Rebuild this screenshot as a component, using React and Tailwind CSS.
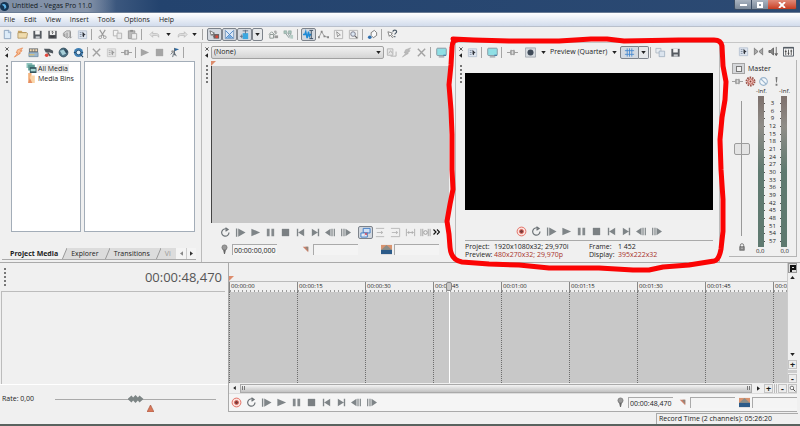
import React, { useState } from "react";

const icons = {
  newFile: (
    <>
      <path d="M2.5 1.5h5l2 2v7h-7z" fill="#dcebf8" stroke="#8ba3bd" />
      <path d="M7 1v3h3" fill="#b5cfe8" stroke="#8ba3bd" strokeWidth=".7" />
    </>
  ),
  folder: (
    <>
      <path d="M1 3.500V2h4l1 1.200h4V5H2.500z" fill="#c9a363" />
      <path d="M1 10V4h9.500l1 .8-1 5.200z" fill="#f0dcae" stroke="#a98b53" strokeWidth=".8" />
    </>
  ),
  save: (
    <>
      <path d="M1.500 2h9v8.500h-9z" fill="#555a60" />
      <path d="M3.500 2h5v4h-5z" fill="#f4f4f4" />
      <path d="M4 8h4.500v2.500H4z" fill="#c9ccd0" />
    </>
  ),
  saveAs: (
    <>
      <path d="M1.500 2h9v8.500h-9z" fill="#4c4f54" />
      <path d="M3 2h6v4.500H3z" fill="#f1f1f1" />
      <path d="M5 3.200c1-1 2.500 0 1 1.200v.8M4 8.500h4" stroke="#333" fill="none" />
    </>
  ),
  render: (
    <>
      <path d="M1.500 7.500V4.500L5 2h4v6l-3 2z" fill="#d8d8d8" stroke="#999" />
      <path d="M3 8V5m2.500 4V4M9 3v7l1.500-1.500" stroke="#8a8a8a" fill="none" />
    </>
  ),
  props: (
    <>
      <path d="M1.500 2h9v8.500h-9z" fill="#dfe6f0" stroke="#b9c4d3" />
      <path d="M3 4h2M3 6h2M3 8h2" stroke="#7d8ba0" />
      <path d="M6 3l3.500 3.500H8L7.500 9 6 8z" fill="#30343b" />
    </>
  ),
  propsGray: (
    <>
      <path d="M1.500 2h9v8.500h-9z" fill="#e4e4e4" stroke="#c9c9c9" />
      <path d="M3 4h2M3 6h2M3 8h2" stroke="#aaa" />
      <path d="M6 3l3.500 3.500H8L7.500 9 6 8z" fill="#999" />
    </>
  ),
  cut: (
    <>
      <path d="M3 1l4.500 7M9 1L4.500 8" stroke="#999" strokeWidth="1.200" fill="none" />
      <circle cx="3.500" cy="9" r="1.500" fill="none" stroke="#999" />
      <circle cx="8.500" cy="9" r="1.500" fill="none" stroke="#999" />
    </>
  ),
  copy: (
    <>
      <path d="M1.500 1.500h5v6h-5z" fill="#f3f3f3" stroke="#b2b2b2" />
      <path d="M5.500 4.500h5v6h-5z" fill="#e9e9e9" stroke="#b2b2b2" />
    </>
  ),
  paste: (
    <>
      <path d="M1.500 2h7v8.500h-7z" fill="#b9b9b9" stroke="#999" />
      <path d="M3.500 1h3v2h-3z" fill="#8d8d8d" />
      <path d="M5 5h5.500v6H5z" fill="#eee" stroke="#aaa" />
    </>
  ),
  undo: <path d="M1 6l3-3v2h4c2.500 0 3 2 2.500 4C10 7.500 9 7 8 7H4v2z" fill="#e3e3e3" stroke="#b5b5b5" strokeWidth=".8" />,
  redo: <path d="M11 6L8 3v2H4C1.500 5 1 7 1.500 9 2 7.500 3 7 4 7h4v2z" fill="#e3e3e3" stroke="#b5b5b5" strokeWidth=".8" />,
  snap: (
    <>
      <path d="M1 2l5 2.500L4.500 5 6 8 5 8.500 3.500 5.500 2.500 7z" fill="#fff" stroke="#555" strokeWidth=".8" />
      <path d="M5 5.500h6v5H5z" fill="#6b6060" />
      <circle cx="8.500" cy="8.500" r="1.600" fill="#d8493a" />
    </>
  ),
  crossfade: (
    <>
      <path d="M1.500 1v9.500h9V1" fill="#dbe7f5" stroke="#7b9cc0" />
      <path d="M2 2l8 8M10 2L2 10" stroke="#4d86c6" />
      <path d="M3 10l3-3.500L9 10z" fill="#6ba5de" />
    </>
  ),
  ripple: (
    <>
      <path d="M4 4.500h6v6.500H4z" fill="#3ba7e0" />
      <path d="M7 1v4M1 8h3M3 6v4M4 2h6" stroke="#5b6f83" />
    </>
  ),
  lockEnv: (
    <>
      <path d="M1 6l3-3 3 3 3-2M2 6h4v4H2z" stroke="#8a9590" fill="none" />
      <circle cx="8" cy="3" r="1.500" fill="#aaa" />
      <path d="M7 7h4v3H7z" fill="#999" />
    </>
  ),
  group: (
    <>
      <path d="M1 2h3v3H1zM6 2h3v3H6z" fill="#a8c7bd" stroke="#889c96" strokeWidth=".6" />
      <path d="M3 5l4 5M8 5l2 5M5 4l3 5" stroke="#899" />
      <path d="M8 6.500h3v4H8z" fill="#b5cdc5" />
    </>
  ),
  normalEdit: (
    <>
      <path d="M0 6h2l1-3 1.500 7L6 3l1 5 1-2h1" stroke="#1d8ad6" strokeWidth="1.600" fill="none" />
      <path d="M7 1.500h4M9 2v8.500M7 10.500h4" stroke="#30475e" fill="none" />
    </>
  ),
  envelope: (
    <>
      <path d="M1 9l3-6 3 5 4 1" stroke="#999" fill="none" />
      <path d="M3 2h2v2H3zM6 7h2v2H6zM0 8h2v2H0zM10 8h2v2h-2z" fill="#888" />
    </>
  ),
  selection: (
    <>
      <path d="M1.500 1.500h9v9h-9z" fill="none" stroke="#b5b5b5" />
      <path d="M4 3l4 3.500-1.800.3L5 8.500z" fill="#fff" stroke="#666" strokeWidth=".7" />
    </>
  ),
  zoomTool: (
    <>
      <path d="M1.500 1.500h9v9h-9z" fill="none" stroke="#b5b5b5" />
      <circle cx="5.500" cy="5.500" r="2.500" fill="#dbe7f3" stroke="#778" />
      <path d="M7.500 7.500l2.500 2.500" stroke="#666" strokeWidth="1.400" />
    </>
  ),
  script: (
    <>
      <path d="M8 1.500L4.500 4v3L7 9.500 10.500 7V4z" fill="#fafafa" stroke="#555" strokeWidth=".8" />
      <circle cx="3" cy="9" r="2" fill="#2f6fae" />
    </>
  ),
  help: (
    <>
      <path d="M1 3l5 1.500-1.500 1L7 8.500 6 9.500 3.500 6.500 2.500 8z" fill="#fff" stroke="#666" strokeWidth=".8" />
      <path d="M6.500 3c0-2.500 4-2.500 4 0 0 1.500-2 1.500-2 3M8.500 7.500V9" stroke="#4a5966" strokeWidth="1.300" fill="none" />
    </>
  ),
  bolt: <path d="M10.500 1L5 3 3.500 6.500h2L1.500 11 8 7H6.500L10 4H8z" fill="#f9c096" stroke="#e6864f" strokeWidth=".8" />,
  importMedia: (
    <>
      <path d="M1 1.500h10v4H1z" fill="#6d7276" />
      <path d="M2 2.500h2v2H2zM5 2.500h2v2H5zM8 2.500h2v2H8z" fill="#f5d9ae" />
      <path d="M1 6h10v4.500H1z" fill="#9db7cc" stroke="#5d7d98" strokeWidth=".7" />
      <path d="M1 8.500h6" stroke="#e8c25f" />
    </>
  ),
  capture: (
    <>
      <path d="M1 2h6l4 2v3L7 6H3z" fill="#50585f" />
      <path d="M5 6l3 4" stroke="#555" strokeWidth="1.500" />
      <circle cx="4" cy="9" r="2" fill="#e2493e" />
    </>
  ),
  disc: (
    <>
      <circle cx="6" cy="6" r="4.800" fill="#4f7487" stroke="#3a5564" />
      <path d="M2 4l4-1 3 4-4 2z" fill="#a7cfd8" />
      <path d="M6 1l5 4-2 2z" fill="#30485a" />
    </>
  ),
  globe: (
    <>
      <circle cx="6" cy="6" r="5" fill="#3f7fb4" />
      <circle cx="6" cy="6" r="2.500" fill="#e4f1fb" stroke="#2b5578" />
      <path d="M1 6h2M9 6h2M8 8l3 3" stroke="#274a68" strokeWidth="1.300" />
    </>
  ),
  close: <path d="M2 2l8 8M10 2L2 10" stroke="#a2a2a2" strokeWidth="1.500" />,
  fx: <path d="M0 6h4M8 6h4M4.500 3v6M7.500 3v6M4 4v4h4V4z" stroke="#999" fill="#ddd" />,
  playGray: <path d="M2 2l9 4-9 4z" fill="#a5a5a5" />,
  stopGray: <path d="M2 2h8v8H2z" fill="#a5a5a5" />,
  preview: (
    <>
      <path d="M6 1l5 1.500-5 2z" fill="#29669e" />
      <path d="M6 1v8M2 8l3-3 3 5M4 11l1-4" stroke="#5b6670" fill="none" />
      <circle cx="4" cy="5" r="1.500" fill="#999" />
    </>
  ),
  mediaFx: (
    <>
      <path d="M1.500 2h6v7h-6z" fill="#e7e7e7" stroke="#b5b5b5" />
      <path d="M3 7l2-3 2 3M5 10h6V5" stroke="#b0b0b0" fill="none" />
    </>
  ),
  boltGray: <path d="M10.500 1L5 3 3.500 6.500h2L1.500 11 8 7H6.500L10 4H8z" fill="#bbb" stroke="#aaa" strokeWidth=".6" />,
  monitor: (
    <>
      <rect x=".8" y="1.300" width="10.400" height="8" rx="1" fill="#8fdfe5" stroke="#8496a1" />
      <path d="M3 10.800h6" stroke="#8b949c" strokeWidth="1.200" />
      <path d="M8 9h3" stroke="#3d78a6" strokeWidth="1.200" />
    </>
  ),
  split: (
    <>
      <path d="M.500 1h11v10H.500z" fill="#d6dbe0" stroke="#a5abb2" />
      <circle cx="6" cy="6" r="3.300" fill="#3f4a58" />
    </>
  ),
  grid: <path d="M1 4h10M1 8h10M3.500 1.500v9M6 1.500v9M8.500 1.500v9" stroke="#3f86cf" strokeWidth=".9" />,
  copyBlue: (
    <>
      <path d="M1 1.500h5.500v5H1z" fill="#e8edf2" stroke="#a5afba" strokeWidth=".8" />
      <path d="M4.500 4.500h6v6h-6z" fill="#dbe4ee" stroke="#9aaabb" strokeWidth=".8" />
    </>
  ),
  refresh: <path d="M8 2.700A4 4 0 1 0 9.800 6M6 .8l2.800 2L6 4.500" stroke="#6c7276" strokeWidth="1.300" fill="none" />,
  playStart: <path d="M1 1.500h1.500v9H1zM3.500 1.500L11.500 6l-8 4.500z" fill="#7f8588" />,
  play: <path d="M1.500 1.800L11 6l-9.500 4.200z" fill="#7f8588" />,
  pause: <path d="M2 2h3v8H2zM7 2h3v8H7z" fill="#858a8d" />,
  stop: <path d="M2 2h8v8H2z" fill="#7b8083" />,
  first: <path d="M2 2h1.500v8H2zM10 2v8L3.500 6z" fill="#7f8588" />,
  last: <path d="M8.500 2H10v8H8.500zM2 2v8l6.500-4z" fill="#7f8588" />,
  prevFrame: <path d="M0 6l6-4v8zM7 2h1.300v8H7zM9.500 2h1.300v8H9.500z" fill="#7f8588" />,
  nextFrame: <path d="M12 6L6 2v8zM3.700 2H5v8H3.700zM1.200 2h1.300v8H1.200z" fill="#7f8588" />,
  record: (
    <>
      <circle cx="6" cy="6" r="4.800" fill="#fbe3df" stroke="#e0685c" />
      <circle cx="6" cy="6" r="2.200" fill="#7a3a3a" stroke="#dd675b" />
    </>
  ),
  overlay: (
    <>
      <path d="M3.500 1.500h7.500v5H3.500z" fill="#cfe0f5" stroke="#3b79c4" />
      <path d="M1 6.500h7V11H1z" fill="#e4ecf7" stroke="#3b79c4" />
      <path d="M5 6l3 3M8 6L5 9" stroke="#d34b5c" />
    </>
  ),
  addRight: <path d="M1 1.500h9M1 10.500h9M2 6h6M6.500 4.500L8.500 6l-2 1.500" stroke="#b0b0b0" fill="none" strokeWidth=".9" />,
  addEdge: <path d="M1 1.500h9.500v9H1M2 6h6M6.500 4.500L8.500 6l-2 1.500" stroke="#b0b0b0" fill="none" strokeWidth=".9" />,
  fit: <path d="M1.500 2v8M10.500 2v8M3 6h6M4.500 4.500L3 6l1.500 1.500M7.500 4.500L9 6 7.500 7.500" stroke="#a5a5a5" fill="none" strokeWidth=".9" />,
  bars: (
    <>
      <path d="M1 2v8M3 2v8M9 2v8M11 2v8" stroke="#999" strokeWidth=".9" />
      <circle cx="6" cy="6" r="2" fill="none" stroke="#999" />
    </>
  ),
  mic: (
    <>
      <circle cx="6" cy="3.800" r="2.800" fill="#9a9a9a" stroke="#666" strokeWidth=".7" />
      <path d="M4.500 6.500h3L6.500 11h-1z" fill="#666" />
    </>
  ),
  flagStart: (
    <>
      <path d="M3 3h6v6z" fill="#c98069" />
      <path d="M6 3h3v5z" fill="#8d857d" />
    </>
  ),
  length: (
    <>
      <path d="M0 1h12v10H0z" fill="#d8936f" />
      <path d="M0 6.500L6 1l6 5.500z" fill="#8b8d88" />
      <path d="M0 6.500h12V11H0z" fill="#2c5b89" />
    </>
  ),
  downmix: <path d="M1.500 2v8M10.500 2v8M2 3l3.500 3L2 9M10 3L6.500 6 10 9" stroke="#777" fill="#aaa" />,
  dim: <path d="M1 5h2l3-3v8L3 7H1zM9 1v9M7.500 8L9 10.500 10.500 8" fill="#888" stroke="#5b5b5b" strokeWidth=".9" />,
  mixer: (
    <>
      <path d="M.500 1.500h11v9.500H.500z" fill="#f7f7f7" stroke="#505860" />
      <path d="M.500 2h11" stroke="#505860" strokeWidth="1.500" />
      <path d="M3 4v6M6 4v6M9 4v6M2 6h2M5 8h2M8 5.500h2" stroke="#444" strokeWidth=".9" />
    </>
  ),
  gear: (
    <>
      <circle cx="6" cy="6" r="4.500" fill="none" stroke="#9b5046" strokeWidth="1.800" strokeDasharray="1.800 1" />
      <circle cx="6" cy="6" r="3" fill="#f0c4bc" stroke="#b2483d" />
      <circle cx="6" cy="6" r="1" fill="#8c3b33" />
    </>
  ),
  mute: (
    <>
      <circle cx="6" cy="6" r="4.200" fill="#f2f7fb" stroke="#9bb5cd" strokeWidth="1.200" />
      <path d="M3 3l6 6" stroke="#9bb5cd" strokeWidth="1.200" />
    </>
  ),
  solo: <path d="M5 1h2l-.500 6h-1zM5 8.500h2v2H5z" fill="#777" />,
  lock: (
    <>
      <path d="M3.500 6V3.500a2.500 2.500 0 0 1 5 0V6" fill="none" stroke="#666" strokeWidth="1.200" />
      <path d="M2.500 5.500h7V11h-7z" fill="#888" stroke="#555" strokeWidth=".8" />
      <path d="M6 7v2" stroke="#eee" />
    </>
  ),
  magnify: (
    <>
      <circle cx="5" cy="5" r="3" fill="#fff" stroke="#444" strokeWidth="1.200" />
      <path d="M7 7l4 4" stroke="#333" strokeWidth="1.500" />
    </>
  ),
};

const Icon = ({ name, className = "h-[11px] w-[11px]" }) => (
  <svg viewBox="0 0 12 12" className={`shrink-0 ${className}`} aria-hidden="true">
    {icons[name]}
  </svg>
);

const IconButton = ({ name, label }) => (
  <button type="button" aria-label={label || name} className="flex h-[14px] w-[15px] shrink-0 items-center justify-center">
    <Icon name={name} />
  </button>
);

const ActiveButton = ({ name }) => (
  <button
    type="button"
    aria-label={name}
    aria-pressed="true"
    className="flex h-[13px] w-[15px] shrink-0 items-center justify-center rounded-xs border border-[#7d838b] bg-[#d3d8df]"
  >
    <Icon name={name} />
  </button>
);

const Sep = () => <span className="mx-px h-[11px] w-px shrink-0 bg-[#a5a5a5]" />;

const Caret = ({ className = "" }) => (
  <svg viewBox="0 0 6 4" className={`h-[3px] w-[5px] shrink-0 ${className}`} aria-hidden="true">
    <path d="M0 0h6L3 4z" fill="#222" />
  </svg>
);

// close mark, collapse arrow and the dotted handle on a docked window
const Grip = () => (
  <div className="flex w-[9px] shrink-0 flex-col items-center pt-[2px]">
    <button type="button" aria-label="Close panel" className="flex h-[7px] items-center">
      <svg viewBox="0 0 5 5" className="h-[4px] w-[4px]">
        <path d="M.500.500l4 4M4.500.500l-4 4" stroke="#333" />
      </svg>
    </button>
    <button type="button" aria-label="Collapse panel" className="flex h-[7px] items-center">
      <svg viewBox="0 0 4 6" className="h-[5px] w-[3px]">
        <path d="M4 0v6L0 3z" fill="#222" />
      </svg>
    </button>
    <span className="mt-[6px] h-[18px] border-l-2 border-dotted border-[#777]" />
  </div>
);

const transport = ["refresh", "playStart", "play", "pause", "stop", "first", "last", "prevFrame", "nextFrame"];

const Transport = ({ record }) => (
  <>
    {record && <IconButton name="record" />}
    {transport.map((name) => (
      <IconButton key={name} name={name} />
    ))}
  </>
);

const TimeField = ({ icon, label, value }) => (
  <label className="flex items-center gap-[2px]">
    <Icon name={icon} />
    <input
      type="text"
      aria-label={label}
      defaultValue={value}
      className="h-[11px] w-[45px] border-t border-l border-[#aaa] bg-[#f4f4f4] pl-px text-[7px] outline-none"
    />
  </label>
);

const TitleBar = () => (
  <header className="flex h-[13px] items-start justify-between border-b border-[#6a7c95] bg-linear-to-r from-[#7e8fa8] via-[#23436e] via-20% to-[#2c4a73]">
    <div className="flex h-3 items-center gap-[3px] bg-linear-to-r from-[#7f8fa6] via-[#8593a9] via-75% to-transparent pr-6">
      <svg viewBox="0 0 10 10" className="h-[9px] w-[9px]" aria-hidden="true">
        <circle cx="5" cy="5" r="5" fill="#153554" />
        <path d="M2 3c3-2 5 0 5 3L5 8C5 5 4 4 2 3z" fill="#5fb3e8" />
      </svg>
      <h1 className="text-[7px] text-[#101820]">Untitled - Vegas Pro 11.0</h1>
    </div>
    <div className="mr-[3px] flex h-[10px] overflow-hidden rounded-b-xs border border-t-0 border-[#3c4d63]">
      <button type="button" aria-label="Minimize" className="flex w-4 items-center justify-center bg-linear-to-b from-[#aab4c0] to-[#7b8999]">
        <span className="h-[2px] w-[7px] bg-white" />
      </button>
      <button type="button" aria-label="Restore" className="flex w-[17px] items-center justify-center border-l border-[#3c4d63] bg-linear-to-b from-[#aab4c0] to-[#7b8999]">
        <span className="h-[6px] w-[6px] border-2 border-white" />
      </button>
      <button type="button" aria-label="Close" className="flex w-7 items-center justify-center bg-linear-to-b from-[#e08a78] to-[#c73a1e]">
        <svg viewBox="0 0 8 6" className="h-[6px] w-2">
          <path d="M1 0l6 6M7 0L1 6" stroke="#fff" strokeWidth="1.800" />
        </svg>
      </button>
    </div>
  </header>
);

const MenuBar = () => (
  <nav className="flex h-[14px] items-center gap-[9px] border-b border-[#b9c0cc] bg-linear-to-b from-white to-[#d2dcec] pl-1">
    {["File", "Edit", "View", "Insert", "Tools", "Options", "Help"].map((item) => (
      <button key={item} type="button">
        {item}
      </button>
    ))}
  </nav>
);

const MainToolbar = () => (
  <div className="flex h-4 items-center border-b border-[#c6c6c6]">
    <IconButton name="newFile" />
    <IconButton name="folder" />
    <IconButton name="save" />
    <IconButton name="saveAs" />
    <IconButton name="render" />
    <IconButton name="props" />
    <Sep />
    <span className="w-[2px]" />
    <IconButton name="cut" />
    <IconButton name="copy" />
    <IconButton name="paste" />
    <Sep />
    <span className="w-1" />
    <IconButton name="undo" />
    <Caret className="mx-1" />
    <IconButton name="redo" />
    <Caret className="mr-1 ml-[2px]" />
    <Sep />
    <div className="mx-[3px] flex">
      <ActiveButton name="snap" />
      <ActiveButton name="crossfade" />
      <ActiveButton name="ripple" />
      <button
        type="button"
        aria-label="Ripple options"
        className="flex h-[13px] w-[11px] items-center justify-center rounded-xs border border-[#7d838b] bg-[#e6e8ea]"
      >
        <Caret />
      </button>
    </div>
    <IconButton name="lockEnv" />
    <IconButton name="group" />
    <Sep />
    <span className="w-[2px]" />
    <ActiveButton name="normalEdit" />
    <IconButton name="envelope" />
    <IconButton name="selection" />
    <IconButton name="zoomTool" />
    <Sep />
    <span className="w-px" />
    <IconButton name="script" />
    <Sep />
    <span className="w-[2px]" />
    <IconButton name="help" />
  </div>
);

const MediaPanel = () => {
  const [tab, setTab] = useState("Project Media");

  return (
    <section className="flex w-1/4 min-w-[202px] border-r border-[#bbb]">
      <div className="flex w-full pl-[2px]">
        <div className="flex w-full flex-col">
          <div className="flex flex-1">
            <Grip />
            <div className="flex flex-1 flex-col pr-[6px]">
              <div className="flex h-[18px] items-center">
                <IconButton name="bolt" />
                <IconButton name="importMedia" />
                <IconButton name="capture" />
                <IconButton name="disc" />
                <IconButton name="globe" />
                <Sep />
                <IconButton name="close" />
                <IconButton name="propsGray" />
                <IconButton name="fx" />
                <Sep />
                <IconButton name="playGray" />
                <IconButton name="stopGray" />
                <IconButton name="preview" />
                <Sep />
              </div>
              <div className="flex flex-1 gap-[3px]">
                <ul className="w-[70px] border border-[#a3adb8] bg-white pt-px pl-[14px]">
                  <li className="flex h-[10px] items-center">
                    <svg viewBox="0 0 12 12" className="h-[10px] w-[11px]" aria-hidden="true">
                      <path d="M0 0h7v6H0z" fill="#8fc4bd" />
                      <path d="M2 2h8v7H2z" fill="#5d9c95" />
                      <path d="M4 5h8v7H4z" fill="#34555c" />
                      <path d="M5 7h6v3H5z" fill="#a7d8d6" />
                    </svg>
                    <button type="button" className="bg-[#ececec] px-px leading-[9px]">
                      All Media
                    </button>
                  </li>
                  <li className="flex h-[10px] items-center">
                    <svg viewBox="0 0 12 12" className="h-[10px] w-[11px]" aria-hidden="true">
                      <path d="M2 0h4v12H2z" fill="#f2b27d" />
                      <path d="M5 3h5v9H3z" fill="#f9d5a8" />
                      <path d="M4 6l3 6H2z" fill="#e58e63" />
                    </svg>
                    <button type="button" className="px-px leading-[9px]">
                      Media Bins
                    </button>
                  </li>
                </ul>
                <div className="flex-1 border border-[#a3adb8] bg-white" />
              </div>
            </div>
          </div>
          <div role="tablist" className="mt-4 mr-[5px] mb-[2px] flex h-3 items-stretch overflow-hidden border-b border-[#aaa] bg-[#dcdcdc]">
            {["Project Media", "Explorer", "Transitions"].map((name) => (
              <div key={name} className="flex">
                <button
                  type="button"
                  role="tab"
                  aria-selected={tab === name}
                  onClick={() => setTab(name)}
                  className={tab === name ? "bg-[#f0f0f0] pr-1 pl-2 font-bold" : "pr-[6px] pl-1"}
                >
                  {name}
                </button>
                <svg viewBox="0 0 5 12" className="h-3 w-[5px]" aria-hidden="true">
                  <path d="M0 12V0h5z" fill={tab === name ? "#f0f0f0" : "#dcdcdc"} />
                  <path d="M0 12L5 0" stroke="#999" />
                </svg>
              </div>
            ))}
            <button type="button" role="tab" aria-selected="false" className="flex-1 pl-1 text-left text-[#999]">
              Vi
            </button>
            <button type="button" aria-label="Previous tabs" className="flex w-[10px] items-center justify-center bg-[#f4f4f4]">
              <svg viewBox="0 0 4 6" className="h-[5px] w-[3px]">
                <path d="M4 0v6L0 3z" fill="#888" />
              </svg>
            </button>
            <button type="button" aria-label="More tabs" className="flex w-[10px] items-center justify-center border-l border-[#ccc] bg-[#f4f4f4]">
              <svg viewBox="0 0 4 6" className="h-[5px] w-[3px]">
                <path d="M0 0v6l4-3z" fill="#333" />
              </svg>
            </button>
          </div>
        </div>
      </div>
    </section>
  );
};

const TrimmerPanel = () => (
  <section className="flex w-[254px] shrink-0 border-r border-[#bbb]">
    <Grip />
    <div className="flex flex-1 flex-col">
      <div className="flex h-[18px] items-center">
        <div className="relative flex-1">
          <select
            aria-label="Trimmer media"
            className="h-[13px] w-full appearance-none rounded-xs border border-[#a0a0a0] bg-linear-to-b from-[#f1f1f1] to-[#d4d4d4] pl-[2px] outline-none"
          >
            <option>(None)</option>
          </select>
          <Caret className="pointer-events-none absolute top-[5px] right-[3px]" />
        </div>
        <IconButton name="mediaFx" />
        <IconButton name="boltGray" />
        <IconButton name="close" />
        <Sep />
        <span className="w-[2px]" />
        <IconButton name="monitor" />
        <span className="w-[6px]" />
      </div>
      <div className="mr-[6px] h-[5px]">
        <svg viewBox="0 0 5 5" className="h-[5px] w-[5px]" aria-hidden="true">
          <path d="M0 0h5L0 5z" fill="#dd8c6c" />
        </svg>
      </div>
      <div className="mr-[6px] flex-1 border-l border-[#444] bg-[#c8c8c8]" />
      <div className="flex h-[18px] items-center pl-[7px]">
        <Transport />
        <span className="w-[5px]" />
        <ActiveButton name="overlay" />
        <IconButton name="addRight" />
        <IconButton name="addEdge" />
        <IconButton name="fit" />
        <IconButton name="bars" />
        <button type="button" aria-label="More" className="flex w-2 items-center">
          <svg viewBox="0 0 7 6" className="h-[6px] w-[7px]">
            <path d="M.500.500L3 3 .500 5.500M4 .500L6.500 3 4 5.500" stroke="#111" strokeWidth="1.200" fill="none" />
          </svg>
        </button>
      </div>
      <div className="mb-1 flex h-[17px] items-center justify-between pr-4 pl-2">
        <TimeField icon="mic" label="Cursor position" value="00:00:00,000" />
        <TimeField icon="flagStart" label="Selection start" value="" />
        <TimeField icon="length" label="Selection length" value="" />
      </div>
    </div>
  </section>
);

const PreviewPanel = () => (
  <section className="relative flex flex-1 border-r border-[#bbb]">
    <Grip />
    <div className="flex flex-1 flex-col pr-[6px]">
      <div className="flex h-[18px] items-center">
        <IconButton name="props" />
        <Sep />
        <span className="w-[2px]" />
        <IconButton name="monitor" />
        <Sep />
        <span className="w-[2px]" />
        <IconButton name="fx" />
        <span className="w-[3px]" />
        <IconButton name="split" />
        <Caret className="mx-[3px]" />
        <label className="flex items-center">
          <select aria-label="Preview quality" className="w-[63px] appearance-none bg-transparent pl-px outline-none">
            <option>Preview (Quarter)</option>
          </select>
          <Caret className="pointer-events-none" />
        </label>
        <span className="ml-[3px] flex">
          <button
            type="button"
            aria-label="Overlays"
            aria-pressed="true"
            className="flex h-[13px] w-[19px] items-center justify-center rounded-l-xs border border-[#7d838b] bg-[#d3dae2]"
          >
            <Icon name="grid" />
          </button>
          <button
            type="button"
            aria-label="Overlay options"
            className="flex h-[13px] w-[10px] items-center justify-center rounded-r-xs border border-l-0 border-[#7d838b] bg-[#e6e8ea]"
          >
            <Caret />
          </button>
        </span>
        <Sep />
        <span className="w-px" />
        <IconButton name="copyBlue" />
        <IconButton name="save" />
      </div>
      <div className="mt-3 flex-1 bg-black" />
      <div className="mt-3 flex h-[18px] items-center justify-center">
        <Transport record />
      </div>
      <dl className="mb-[3px] flex border-t border-[#aaa] pt-[2px] leading-[8px]">
        <div className="grid w-1/2 grid-cols-[29px_1fr] whitespace-nowrap">
          <dt>Project:</dt>
          <dd>1920x1080x32; 29,970i</dd>
          <dt>Preview:</dt>
          <dd className="text-[#a8322a]">480x270x32; 29,970p</dd>
        </div>
        <div className="grid w-1/2 grid-cols-[29px_1fr] whitespace-nowrap">
          <dt>Frame:</dt>
          <dd>1 452</dd>
          <dt>Display:</dt>
          <dd className="text-[#a8322a]">395x222x32</dd>
        </div>
      </dl>
    </div>
    {/* hand-drawn marker around the preview window */}
    <div className="pointer-events-none absolute -top-[6px] -right-[9px] -bottom-[9px] -left-2 z-10">
      <svg viewBox="449 37 280 235" preserveAspectRatio="none" className="h-full w-full overflow-visible" aria-hidden="true">
        <path
          d="M454 39L475 40 510 41 560 41 592 39 608 39 625 41 680 40 715 40Q722 40 723 46L724 66 727 82 726 100 723 118 721 140 722 170 724 200 724 232 722 250Q720 261 715 262L690 266 664 268 650 271 634 271 600 269 550 269 520 266 490 265 463 263Q452 261 451 248L450 235 448 222 451 205 454 190 453 170 453 135 452 110 450 85 452 65 453 48Q453 40 458 40"
          fill="none"
          stroke="#fb0404"
          strokeWidth="5"
          strokeLinejoin="round"
          strokeLinecap="round"
        />
      </svg>
    </div>
  </section>
);

const levels = [3, 6, 9, 12, 15, 18, 21, 24, 27, 30, 33, 36, 39, 42, 45, 48, 51, 54, 57];

const Meter = () => <div className="w-[6px] bg-linear-to-b from-[#7d706c] via-[#8f8d88] via-20% to-[#5f7a70] to-50%" />;

const MasterPanel = () => (
  <section className="flex w-[80px] shrink-0 flex-col pr-[3px] pl-[9px]">
    <div className="flex h-[17px] items-center justify-end pr-px">
      <IconButton name="props" />
      <IconButton name="downmix" />
      <IconButton name="dim" />
      <IconButton name="mixer" />
    </div>
    <div className="mb-[5px] flex flex-1 flex-col border-r border-b border-[#b5b5b5] pl-[3px]">
      <div className="flex h-[17px] items-center gap-[3px]">
        <button type="button" aria-label="Master bus" className="flex h-[11px] w-[13px] items-center justify-center border border-[#a5a5a5] bg-[#d5d7da]">
          <span className="h-[6px] w-[6px] border border-[#777] bg-[#f0f0f0]" />
        </button>
        <h2>Master</h2>
      </div>
      <div className="flex h-2 items-center gap-[2px]">
        <Icon name="fx" />
        <Icon name="gear" />
        <Icon name="mute" />
        <Icon name="solo" />
      </div>
      <div className="flex flex-1 pt-[2px]">
        <div className="flex w-5 flex-col items-center pt-[14px] pb-px">
          <input
            type="range"
            aria-label="Master volume"
            min="0"
            max="100"
            defaultValue="66"
            className="h-[135px] w-4 appearance-none bg-[linear-gradient(90deg,transparent_7px,#999_7px,#999_8px,transparent_8px)] [direction:rtl] [writing-mode:vertical-lr] [&::-webkit-slider-thumb]:h-[12px] [&::-webkit-slider-thumb]:w-4 [&::-webkit-slider-thumb]:appearance-none [&::-webkit-slider-thumb]:rounded-xs [&::-webkit-slider-thumb]:border [&::-webkit-slider-thumb]:border-[#9c9c9c] [&::-webkit-slider-thumb]:bg-[linear-gradient(90deg,#e4e4e4_6px,#999_6px,#999_7px,#e4e4e4_7px)]"
          />
          <Icon name="lock" className="mt-auto mb-1 h-2 w-2" />
        </div>
        <div className="flex flex-1 flex-col text-[6px] leading-[9px]">
          <div className="flex justify-between pr-[6px] pl-1">
            <span>-Inf.</span>
            <span>-Inf.</span>
          </div>
          <div className="flex flex-1 pr-[9px] pl-[6px]">
            <Meter />
            <ul className="flex flex-1 flex-col justify-between pt-1 pb-[2px] text-center leading-[7px]">
              {levels.map((level) => (
                <li key={level} className="flex items-center justify-between">
                  <span className="h-px w-px bg-[#555]" />
                  {level}
                  <span className="h-px w-px bg-[#555]" />
                </li>
              ))}
            </ul>
            <Meter />
          </div>
          <div className="flex justify-between pr-[7px] pl-1">
            <span>0,0</span>
            <span>0,0</span>
          </div>
        </div>
      </div>
    </div>
  </section>
);

const marks = ["00:00:00", "00:00:15", "00:00:30", "00:00:45", "00:01:00", "00:01:15", "00:01:30", "00:01:45", "00:02:00"];

const SmallButton = ({ label, children }) => (
  <button
    type="button"
    aria-label={label}
    className="flex h-[9px] w-[9px] shrink-0 items-center justify-center border border-[#c4c4c4] bg-[#ececec] text-[9px] leading-none font-bold"
  >
    {children}
  </button>
);

const TrackColumn = () => (
  <div className="flex w-[228px] shrink-0 flex-col">
    <div className="flex h-[28px] items-center justify-between pr-[6px] pl-1">
      <span className="h-[18px] border-l-2 border-dotted border-[#777]" />
      <output className="text-[13px] text-[#555]">00:00:48,470</output>
    </div>
    <div className="mr-[3px] ml-px flex-1 border-t border-l border-[#bcbcbc]" />
    <div className="flex h-[28px] items-start border-t border-white pt-2 pl-[2px]">
      <label htmlFor="rate" className="w-[53px] leading-[12px]">
        Rate: 0,00
      </label>
      <div className="mr-3 flex-1">
        <input
          id="rate"
          type="range"
          min="-20"
          max="20"
          defaultValue="0"
          className="block h-3 w-full appearance-none bg-[linear-gradient(transparent_6px,#aaa_6px,#aaa_7px,transparent_7px)] [&::-webkit-slider-thumb]:h-2 [&::-webkit-slider-thumb]:w-4 [&::-webkit-slider-thumb]:appearance-none [&::-webkit-slider-thumb]:bg-[#7d8585] [&::-webkit-slider-thumb]:[clip-path:polygon(0%_50%,25%_5%,35%_30%,50%_0%,65%_30%,75%_5%,100%_50%,75%_95%,65%_70%,50%_100%,35%_70%,25%_95%)]"
        />
        <svg viewBox="0 0 8 8" className="ml-[92px] h-[7px] w-[7px]" aria-hidden="true">
          <path d="M4 0l4 8H0z" fill="#d9785a" stroke="#a85a44" strokeWidth=".8" />
        </svg>
      </div>
    </div>
  </div>
);

const Timeline = () => (
  <section className="flex flex-1 border-t border-[#aaa]">
    <TrackColumn />
    <div className="mr-[3px] flex min-w-0 flex-1 flex-col border-b border-l border-[#aaa]">
      <div className="flex flex-1">
        <div className="relative flex min-w-0 flex-1 flex-col overflow-hidden">
          <div className="flex h-[19px] items-end border-b border-[#bbb]">
            <svg viewBox="0 0 5 5" className="h-[5px] w-[5px]" aria-hidden="true">
              <path d="M0 0h5L0 5z" fill="#dd8c6c" />
            </svg>
          </div>
          <ol className="flex flex-1 bg-[#c8c8c8]">
            {marks.map((mark) => (
              <li key={mark} className="flex w-[68px] shrink-0 flex-col">
                <span className="h-[10px] border-l border-[#888] bg-[#efefef] bg-[repeating-linear-gradient(90deg,#999_0px,#999_1px,transparent_1px,transparent_4px)] bg-[length:100%_2px] bg-bottom bg-no-repeat pl-px text-[6px] leading-[8px] font-medium">
                  {mark}
                </span>
                <span className="flex-1 border-l border-dotted border-[#6d6d6d]" />
              </li>
            ))}
          </ol>
          <div className="absolute top-[19px] bottom-0 left-[217px] flex w-[6px] flex-col items-center">
            <span className="h-[9px] w-[6px] rounded-xs border border-[#888] bg-[#c9c9c9]" />
            <span className="w-px flex-1 bg-white" />
          </div>
        </div>
        <div className="flex w-[10px] flex-col items-center border-l border-[#ccc]">
          <button type="button" aria-label="Marker tool" className="mb-[3px] flex h-[10px] w-[9px] items-center justify-center border border-[#999] bg-[#ddd]">
            <svg viewBox="0 0 6 7" className="h-[7px] w-[6px]">
              <path d="M0 0h6v5H2v2H0z" fill="#111" />
              <path d="M2 2h2v1H2z" fill="#ddd" />
            </svg>
          </button>
          <Caret className="rotate-180" />
          <span className="flex-1" />
          <Caret className="mb-1" />
          <SmallButton label="Zoom in track height">+</SmallButton>
          <span className="my-px h-[3px] w-[9px] bg-[#ccc]" />
          <SmallButton label="Zoom out track height">-</SmallButton>
        </div>
      </div>
      <div className="flex h-[10px] items-center">
        <button type="button" aria-label="Scroll left" className="flex w-[11px] justify-center">
          <svg viewBox="0 0 4 6" className="h-[4px] w-[3px]">
            <path d="M4 0v6L0 3z" fill="#222" />
          </svg>
        </button>
        <div className="flex h-[9px] flex-1 items-center justify-between border border-[#aaa] bg-linear-to-b from-[#f4f4f4] to-[#c2c2c2] px-px">
          <span className="h-1 w-[3px] border-x border-[#777]" />
          <span className="h-1 w-[3px] border-x border-[#777]" />
        </div>
        <button type="button" aria-label="Scroll right" className="flex w-3 justify-center">
          <svg viewBox="0 0 4 6" className="h-[5px] w-[3px]">
            <path d="M0 0v6l4-3z" fill="#222" />
          </svg>
        </button>
        <SmallButton label="Zoom in time">+</SmallButton>
        <span className="mx-px h-[9px] w-[3px] border-x border-[#bbb]" />
        <SmallButton label="Zoom out time">-</SmallButton>
        <span className="w-px" />
        <SmallButton label="Zoom tool">
          <Icon name="magnify" className="h-[7px] w-[7px]" />
        </SmallButton>
      </div>
      <div className="flex h-[18px] items-center border-t border-[#ddd] bg-[#f5f5f5]">
        <Transport record />
        <div className="ml-auto flex gap-1">
          <TimeField icon="mic" label="Timeline position" value="00:00:48,470" />
          <TimeField icon="flagStart" label="Loop start" value="" />
          <TimeField icon="length" label="Loop length" value="" />
        </div>
      </div>
    </div>
  </section>
);

const App = () => {
  return (
    <div className="flex min-h-screen flex-col overflow-hidden bg-[#f0f0f0] font-['Open_Sans','Noto_Sans',sans-serif] text-[7px] leading-[10px] text-[#1c1c1c]">
      <TitleBar />
      <MenuBar />
      <MainToolbar />
      <main className="flex flex-1 flex-col">
        <div className="flex h-[51vh] min-h-[219px]">
          <MediaPanel />
          <TrimmerPanel />
          <PreviewPanel />
          <MasterPanel />
        </div>
        <Timeline />
      </main>
      <footer className="flex h-[14px] items-center justify-end border-b-2 border-[#59635f] pr-[2px]">
        <p className="w-[142px] border-t border-l border-[#aaa] pl-[2px]">Record Time (2 channels): 05:26:20</p>
      </footer>
    </div>
  );
};

export default App;
